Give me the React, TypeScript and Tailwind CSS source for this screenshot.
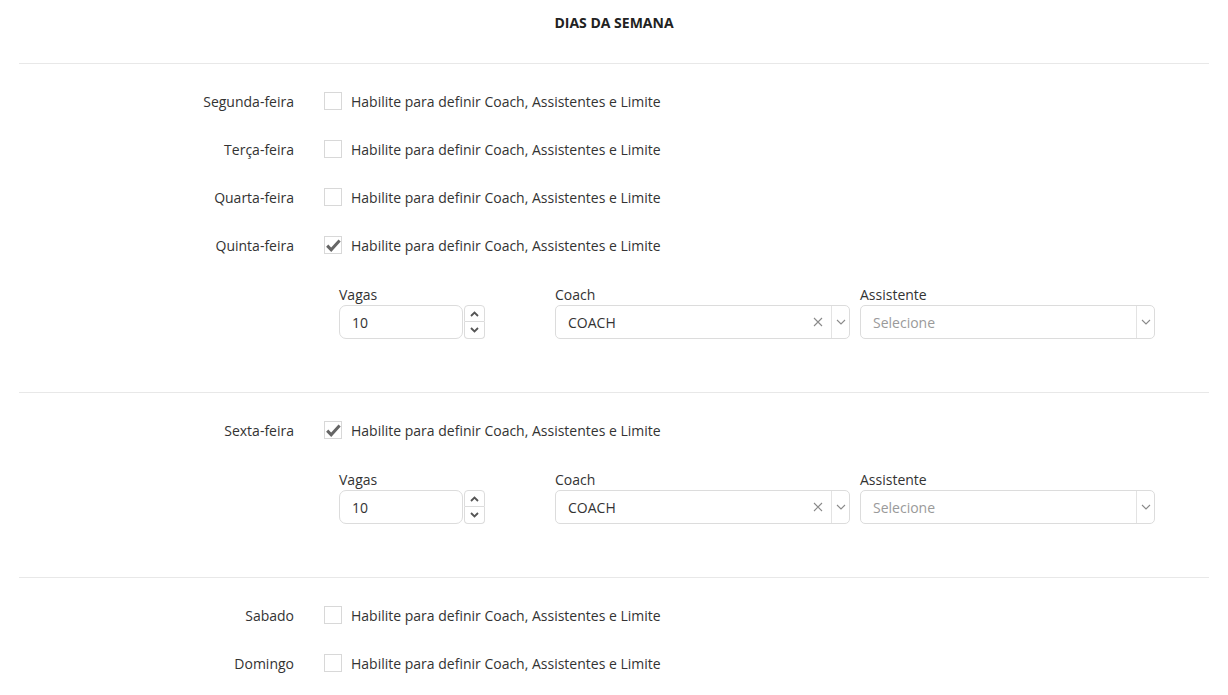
import React from 'react';

const days = [
  { name: 'Segunda-feira', on: false },
  { name: 'Terça-feira', on: false },
  { name: 'Quarta-feira', on: false },
  { name: 'Quinta-feira', on: true },
  { name: 'Sexta-feira', on: true },
  { name: 'Sabado', on: false },
  { name: 'Domingo', on: false },
];

function Check({ on }: { on: boolean }) {
  return (
    <span className="flex h-[18px] w-[18px] items-center justify-center border border-[#d8d8d8] bg-white">
      {on && (
        <svg width="15" height="13" viewBox="0 0 15 13">
          <path d="M1.2 6.6 L5.2 10.8 L13.6 1.6" fill="none" stroke="#666" strokeWidth="3" />
        </svg>
      )}
    </span>
  );
}

function Chevron({ up }: { up?: boolean }) {
  return (
    <svg width="9" height="6" viewBox="0 0 9 6">
      <path d={up ? 'M1 5 L4.5 1.5 L8 5' : 'M1 1 L4.5 4.5 L8 1'} fill="none" stroke="#555" strokeWidth="1.8" />
    </svg>
  );
}

function Select({ value }: { value?: string }) {
  return (
    <div className="flex h-[34px] w-[295px] items-center rounded-[5px] border border-[#dcdcdc] bg-white">
      <span className={`flex-1 pl-[12px] ${value ? 'text-[#333]' : 'text-[#9a9a9a]'}`}>{value ?? 'Selecione'}</span>
      {value && (
        <svg width="10" height="10" viewBox="0 0 10 10" className="mr-[8px]">
          <path d="M1 1 L9 9 M9 1 L1 9" stroke="#8a8a8a" strokeWidth="1.1" />
        </svg>
      )}
      <span className="h-[32px] w-px bg-[#e3e3e3]" />
      <span className="flex w-[17px] items-center justify-center">
        <svg width="10" height="6" viewBox="0 0 10 6">
          <path d="M1 1 L5 5 L9 1" fill="none" stroke="#8a8a8a" strokeWidth="1.1" />
        </svg>
      </span>
    </div>
  );
}

function Fields() {
  return (
    <div className="ml-[320px] flex pt-[16px] pb-[53px]">
      <div className="w-[216px]">
        <div className="h-[20px] leading-[20px]">Vagas</div>
        <div className="flex">
          <div className="flex h-[34px] w-[124px] items-center rounded-[7px] border border-[#dcdcdc] pl-[12px]">10</div>
          <div className="ml-px flex flex-col">
            <span className="flex h-[17px] w-[21px] items-center justify-center rounded-t-[4px] border border-[#dcdcdc]">
              <Chevron up />
            </span>
            <span className="flex h-[17px] w-[21px] items-center justify-center rounded-b-[4px] border border-t-0 border-[#dcdcdc]">
              <Chevron />
            </span>
          </div>
        </div>
      </div>
      <div className="w-[305px]">
        <div className="h-[20px] leading-[20px]">Coach</div>
        <Select value="COACH" />
      </div>
      <div>
        <div className="h-[20px] leading-[20px]">Assistente</div>
        <Select />
      </div>
    </div>
  );
}

export default function App() {
  return (
    <div className="min-h-screen bg-white text-[14px] text-[#333]" style={{ fontFamily: '"Open Sans", sans-serif' }}>
      <div className="flex h-[44px] items-end justify-center pb-[11px] text-[14px] font-bold text-[#222]">DIAS DA SEMANA</div>
      <div className="mx-[19px] mt-[19px]">
        {days.map((d, i) => {
          const first = i === 0 || days[i - 1].on;
          return (
            <div key={d.name} className={first ? 'border-t border-[#e8e8e8] pt-[13px]' : ''}>
              <div className="flex h-[48px] items-center">
                <span className="w-[275px] text-right">{d.name}</span>
                <span className="ml-[30px]"><Check on={d.on} /></span>
                <span className="ml-[9px]">Habilite para definir Coach, Assistentes e Limite</span>
              </div>
              {d.on && <Fields />}
            </div>
          );
        })}
      </div>
    </div>
  );
}
